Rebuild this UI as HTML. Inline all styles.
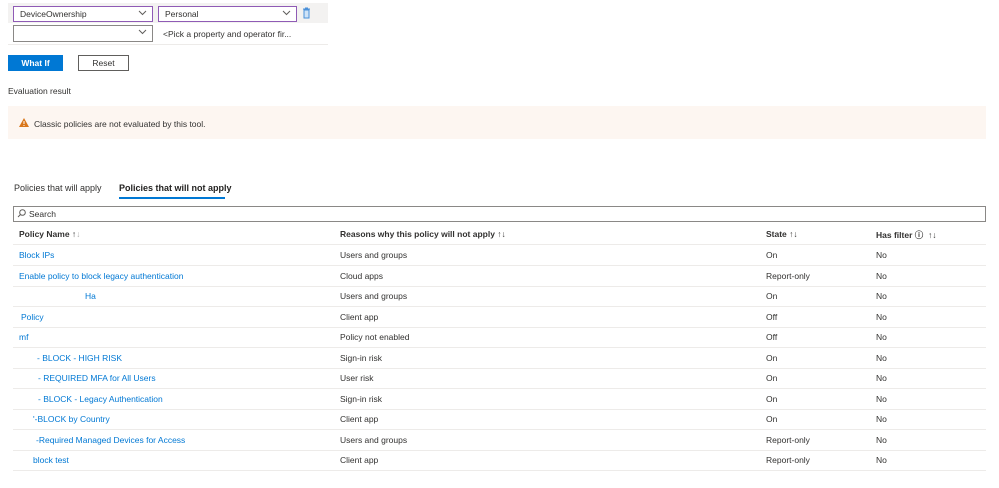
<html><head><style>
body{margin:0;background:#fff;font-family:"Liberation Sans",sans-serif;font-size:8.5px;color:#323130;position:relative;width:999px;height:488px;overflow:hidden}
.a{position:absolute}
.sel{position:absolute;height:14px;border:1px solid #8a8886;background:#fff;box-sizing:border-box;line-height:12px;padding-left:6px}
.sel svg{position:absolute;right:5px;top:3px}
.lnk{color:#0078d4}
.row{position:absolute;left:13px;width:973px;height:20px;border-bottom:1px solid #edebe9}
.row span{position:absolute;top:5px}
</style></head><body>
<div class="a" style="left:8px;top:3px;width:320px;height:20px;background:#f3f2f1"></div>
<div class="sel" style="left:13px;top:6px;width:140px;height:16px;border-color:#8f5bb5;line-height:14px">DeviceOwnership<svg width="9" height="6"><path d="M1 1l3.5 3.5L8 1" stroke="#605e5c" fill="none"/></svg></div>
<div class="sel" style="left:158px;top:6px;width:139px;height:16px;border-color:#8f5bb5;line-height:14px">Personal<svg width="9" height="6"><path d="M1 1l3.5 3.5L8 1" stroke="#605e5c" fill="none"/></svg></div>
<svg class="a" style="left:302px;top:7px" width="9" height="12"><path d="M1 2h7M3 1h3M2 3h5v8H2z" stroke="#4a90d9" fill="#cfe3f7"/></svg>
<div class="sel" style="left:13px;top:25px;width:140px;height:17px">&nbsp;<svg width="9" height="6"><path d="M1 1l3.5 3.5L8 1" stroke="#605e5c" fill="none"/></svg></div>
<div class="a" style="left:163px;top:29px">&lt;Pick a property and operator fir...</div>
<div class="a" style="left:8px;top:44px;width:320px;height:1px;background:#edebe9"></div>
<div class="a" style="left:8px;top:55px;width:55px;height:16px;background:#0078d4;color:#fff;font-weight:bold;text-align:center;line-height:16px">What If</div>
<div class="a" style="left:78px;top:55px;width:49px;height:14px;border:1px solid #605e5c;text-align:center;line-height:14px">Reset</div>
<div class="a" style="left:8px;top:86px">Evaluation result</div>
<div class="a" style="left:8px;top:106px;width:978px;height:33px;background:#fdf6f1"></div>
<svg class="a" style="left:19px;top:118px" width="10" height="9"><path d="M5 0L10 9H0z" fill="#d9761a"/><path d="M5 3v3M5 7v1" stroke="#fff"/></svg>
<div class="a" style="left:34px;top:119px">Classic policies are not evaluated by this tool.</div>
<div class="a" style="left:14px;top:183px;font-size:9px">Policies that will apply</div>
<div class="a" style="left:119px;top:183px;font-size:9px;font-weight:bold;color:#201f1e">Policies that will not apply</div>
<div class="a" style="left:119px;top:197px;width:106px;height:2px;background:#0078d4"></div>
<div class="a" style="left:13px;top:206px;width:973px;height:16px;border:1px solid #8a8886;box-sizing:border-box"></div>
<svg class="a" style="left:17px;top:209px" width="9" height="9"><circle cx="5.5" cy="3.5" r="2.8" stroke="#605e5c" fill="none"/><path d="M3.5 5.5L1 8" stroke="#605e5c"/></svg>
<div class="a" style="left:29px;top:209px">Search</div>
<div class="row" style="top:224px;height:20px"><span style="left:6px;font-weight:bold">Policy Name ↑<span style="color:#aaa;position:static">↓</span></span><span style="left:327px;font-weight:bold">Reasons why this policy will not apply ↑↓</span><span style="left:753px;font-weight:bold">State ↑↓</span><span style="left:863px;font-weight:bold">Has filter ⓘ &nbsp;↑↓</span></div>
<div class="row" style="top:245px"><span class="lnk" style="left:6px">Block IPs</span><span style="left:327px">Users and groups</span><span style="left:753px">On</span><span style="left:863px">No</span></div>
<div class="row" style="top:265.5px"><span class="lnk" style="left:6px">Enable policy to block legacy authentication</span><span style="left:327px">Cloud apps</span><span style="left:753px">Report-only</span><span style="left:863px">No</span></div>
<div class="row" style="top:286px"><span class="lnk" style="left:72px">Ha</span><span style="left:327px">Users and groups</span><span style="left:753px">On</span><span style="left:863px">No</span></div>
<div class="row" style="top:306.5px"><span class="lnk" style="left:8px">Policy</span><span style="left:327px">Client app</span><span style="left:753px">Off</span><span style="left:863px">No</span></div>
<div class="row" style="top:327px"><span class="lnk" style="left:6px">mf</span><span style="left:327px">Policy not enabled</span><span style="left:753px">Off</span><span style="left:863px">No</span></div>
<div class="row" style="top:347.5px"><span class="lnk" style="left:24px">- BLOCK - HIGH RISK</span><span style="left:327px">Sign-in risk</span><span style="left:753px">On</span><span style="left:863px">No</span></div>
<div class="row" style="top:368px"><span class="lnk" style="left:25px">- REQUIRED MFA for All Users</span><span style="left:327px">User risk</span><span style="left:753px">On</span><span style="left:863px">No</span></div>
<div class="row" style="top:388.5px"><span class="lnk" style="left:25px">- BLOCK - Legacy Authentication</span><span style="left:327px">Sign-in risk</span><span style="left:753px">On</span><span style="left:863px">No</span></div>
<div class="row" style="top:409px"><span class="lnk" style="left:20px">'-BLOCK by Country</span><span style="left:327px">Client app</span><span style="left:753px">On</span><span style="left:863px">No</span></div>
<div class="row" style="top:429.5px"><span class="lnk" style="left:23px">-Required Managed Devices for Access</span><span style="left:327px">Users and groups</span><span style="left:753px">Report-only</span><span style="left:863px">No</span></div>
<div class="row" style="top:450px"><span class="lnk" style="left:20px">block test</span><span style="left:327px">Client app</span><span style="left:753px">Report-only</span><span style="left:863px">No</span></div>
</body></html>
